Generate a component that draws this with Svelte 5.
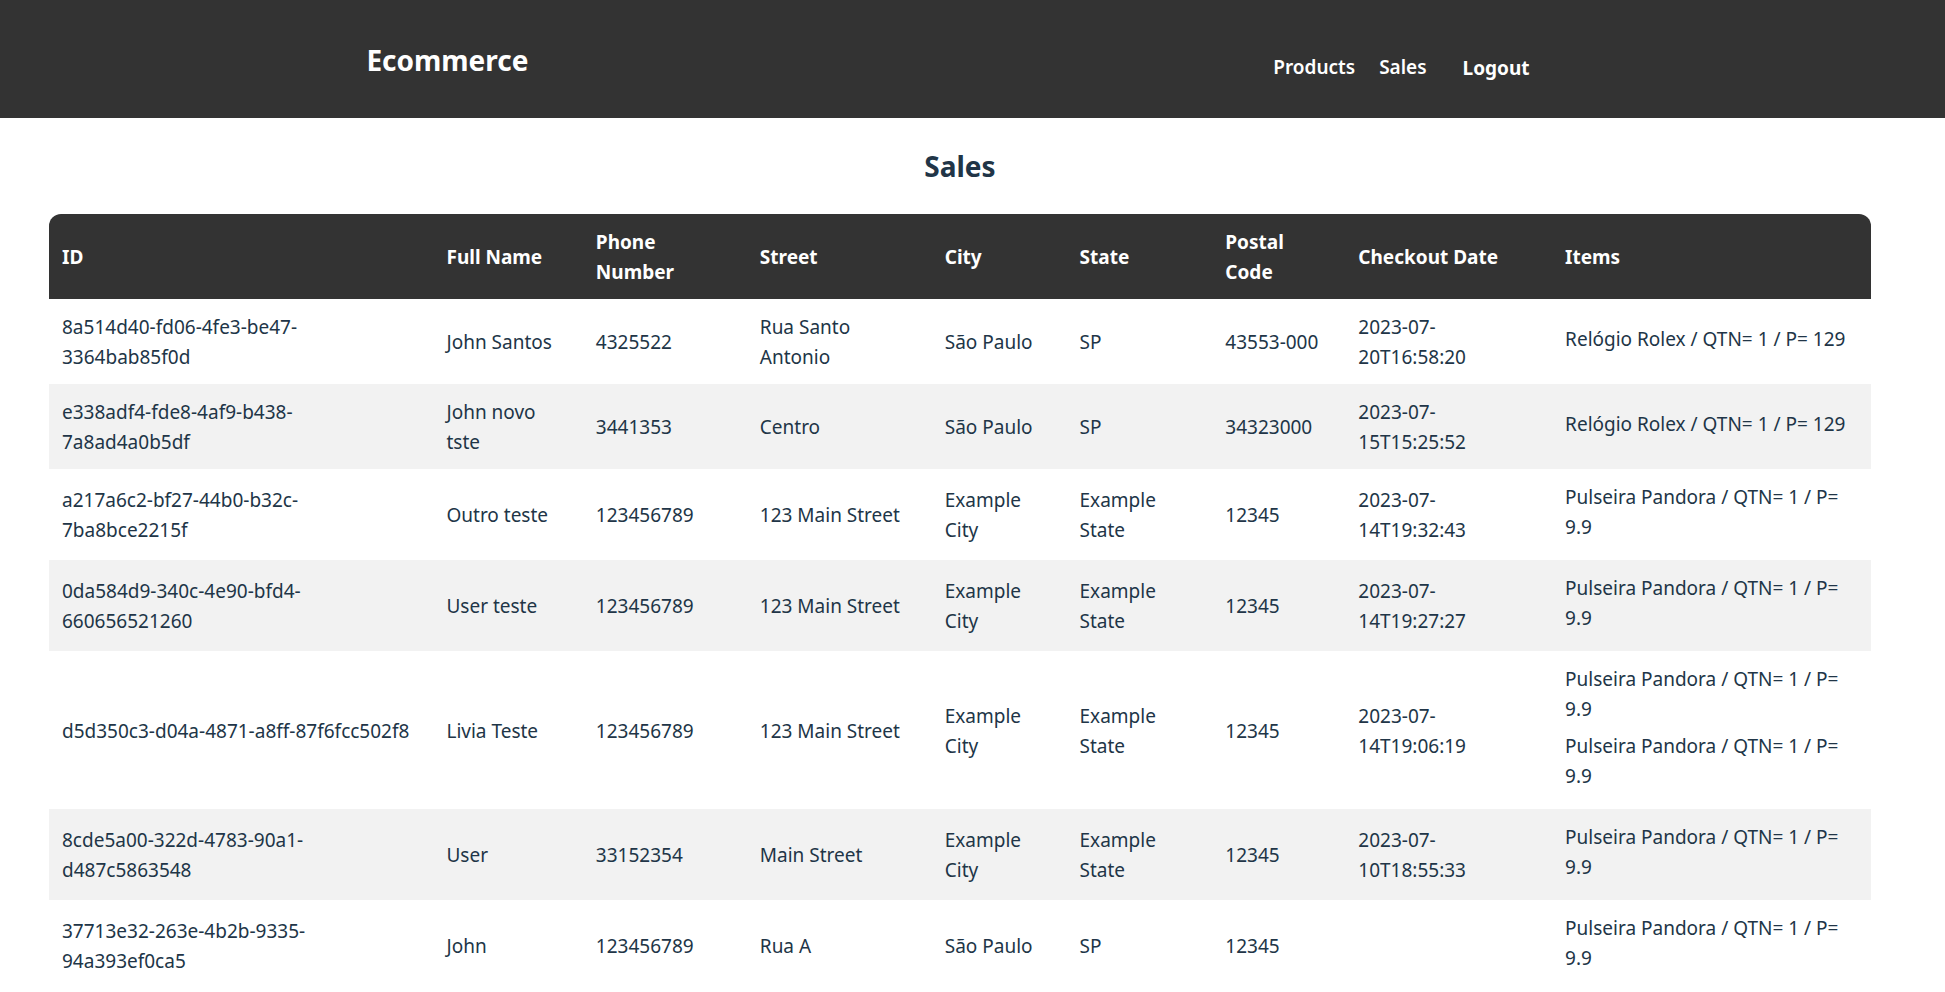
<script>
  const columns = [
    { key: 'id', label: 'ID' },
    { key: 'name', label: 'Full Name' },
    { key: 'phone', label: 'Phone Number' },
    { key: 'street', label: 'Street' },
    { key: 'city', label: 'City' },
    { key: 'state', label: 'State' },
    { key: 'postal', label: 'Postal Code' },
    { key: 'date', label: 'Checkout Date' },
    { key: 'items', label: 'Items' }
  ];

  const watch = { name: 'Relógio Rolex', quantity: 1, price: 129 };
  const bracelet = { name: 'Pulseira Pandora', quantity: 1, price: 9.9 };

  const sales = [
    { id: '8a514d40-fd06-4fe3-be47-3364bab85f0d', name: 'John Santos', phone: '4325522', street: 'Rua Santo Antonio', city: 'São Paulo', state: 'SP', postal: '43553-000', date: '2023-07-20T16:58:20', items: [watch] },
    { id: 'e338adf4-fde8-4af9-b438-7a8ad4a0b5df', name: 'John novo tste', phone: '3441353', street: 'Centro', city: 'São Paulo', state: 'SP', postal: '34323000', date: '2023-07-15T15:25:52', items: [watch] },
    { id: 'a217a6c2-bf27-44b0-b32c-7ba8bce2215f', name: 'Outro teste', phone: '123456789', street: '123 Main Street', city: 'Example City', state: 'Example State', postal: '12345', date: '2023-07-14T19:32:43', items: [bracelet] },
    { id: '0da584d9-340c-4e90-bfd4-660656521260', name: 'User teste', phone: '123456789', street: '123 Main Street', city: 'Example City', state: 'Example State', postal: '12345', date: '2023-07-14T19:27:27', items: [bracelet] },
    { id: 'd5d350c3-d04a-4871-a8ff-87f6fcc502f8', name: 'Livia Teste', phone: '123456789', street: '123 Main Street', city: 'Example City', state: 'Example State', postal: '12345', date: '2023-07-14T19:06:19', items: [bracelet, bracelet] },
    { id: '8cde5a00-322d-4783-90a1-d487c5863548', name: 'User', phone: '33152354', street: 'Main Street', city: 'Example City', state: 'Example State', postal: '12345', date: '2023-07-10T18:55:33', items: [bracelet] },
    { id: '37713e32-263e-4b2b-9335-94a393ef0ca5', name: 'John', phone: '123456789', street: 'Rua A', city: 'São Paulo', state: 'SP', postal: '12345', date: '', items: [bracelet] }
  ];
</script>

<header>
  <h2 class="brand">Ecommerce</h2>
  <nav>
    <a href="#products">Products</a>
    <a href="#sales">Sales</a>
    <button type="button">Logout</button>
  </nav>
</header>

<main>
  <h2 class="title">Sales</h2>
  <table>
    <colgroup>
      {#each columns as column}
        <col class={column.key} />
      {/each}
    </colgroup>
    <thead>
      <tr>
        {#each columns as column}
          <th scope="col">{column.label}</th>
        {/each}
      </tr>
    </thead>
    <tbody>
      {#each sales as sale}
        <tr>
          {#each columns as column}
            <td>
              {#if column.key === 'items'}
                <ul>
                  {#each sale.items as item}
                    <li>{item.name} / QTN= {item.quantity} / P= {item.price}</li>
                  {/each}
                </ul>
              {:else}
                {sale[column.key]}
              {/if}
            </td>
          {/each}
        </tr>
      {/each}
    </tbody>
  </table>
</main>

<style>
  :global(body) {
    margin: 0;
    background: #fff;
    color: #213547;
    font-family: 'Segoe UI', 'Noto Sans', sans-serif;
    font-size: 19px;
    line-height: 30px;
  }

  header {
    display: flex;
    justify-content: space-around;
    align-items: center;
    box-sizing: border-box;
    min-height: 118px;
    padding-right: 25px;
    background: #333;
    color: #fff;
  }

  h2 {
    margin: 0;
    font-size: 28px;
    line-height: 44px;
    font-weight: 700;
  }

  .brand {
    padding-top: 1px;
  }

  nav {
    display: flex;
    align-items: center;
    padding-top: 16px;
  }

  a {
    margin: 0 12px;
    color: inherit;
    font-weight: 600;
    text-decoration: none;
  }

  button {
    padding: 2px 24px 0;
    border: 0;
    background: transparent;
    color: inherit;
    font: inherit;
    font-weight: 700;
    cursor: pointer;
  }

  main {
    padding: 26px 74px 24px 49px;
  }

  .title {
    margin-bottom: 26px;
    text-align: center;
  }

  table {
    width: 100%;
    table-layout: fixed;
    border-collapse: collapse;
    border-radius: 12px 12px 0 0;
    overflow: hidden;
  }

  .id { width: 21.1%; }
  .name { width: 8.2%; }
  .phone { width: 9%; }
  .street { width: 10.15%; }
  .city { width: 7.4%; }
  .state { width: 8%; }
  .postal { width: 7.3%; }
  .date { width: 11.35%; }
  .items { width: 17.5%; }

  th,
  td {
    padding: 13px 16px 12px 13px;
    text-align: left;
    vertical-align: middle;
  }

  th {
    background: #333;
    color: #fff;
    font-weight: 700;
  }

  tbody tr:nth-child(even) {
    background: #f2f2f2;
  }

  ul {
    display: grid;
    gap: 7px;
    margin: 0;
    padding: 0 0 6px;
    list-style: none;
  }
</style>
